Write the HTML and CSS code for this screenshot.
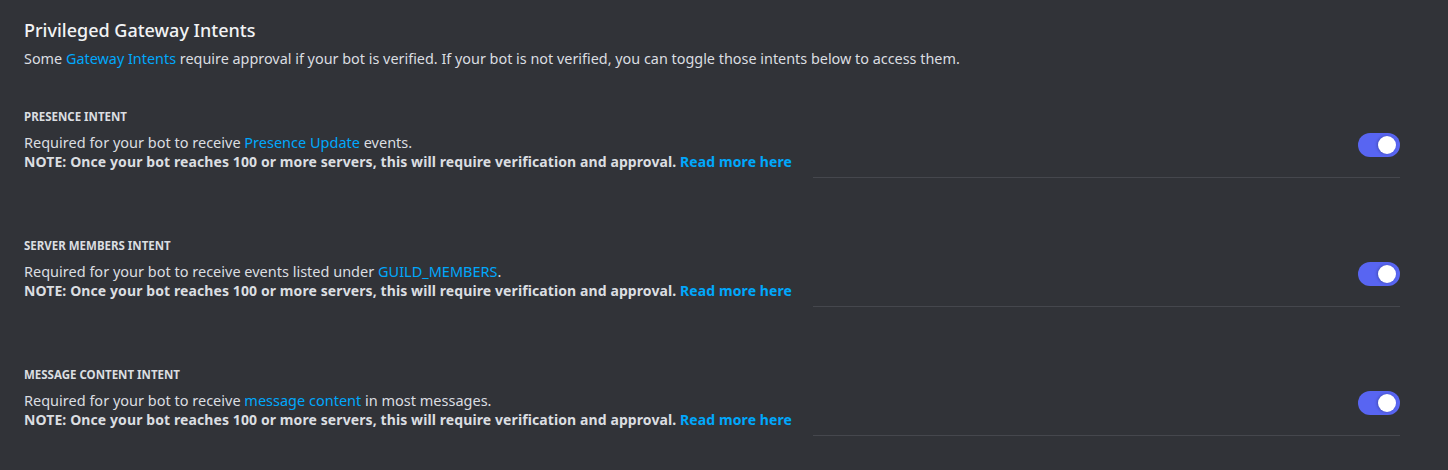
FILE: index.html
```html
<!DOCTYPE html>
<html lang="en">
<head>
<meta charset="utf-8">
<title>Privileged Gateway Intents</title>
<link rel="stylesheet" href="styles.css">
</head>
<body>
<main class="page">
  <header class="intro">
    <h2 class="title">Privileged Gateway Intents</h2>
    <p class="subtitle">Some <a class="link" href="#">Gateway Intents</a> require approval if your bot is verified. If your bot is not verified, you can toggle those intents below to access them.</p>
  </header>

  <section class="intent">
    <h3 class="intent-label">PRESENCE INTENT</h3>
    <div class="intent-row">
      <div class="intent-text">
        <p class="desc">Required for your bot to receive <a class="link" href="#">Presence Update</a> events.</p>
        <p class="note">NOTE: Once your bot reaches 100 or more servers, this will require verification and approval. <a class="link" href="#">Read more here</a></p>
      </div>
      <span class="toggle on" role="switch" aria-checked="true"><span class="knob"></span></span>
    </div>
    <div class="divider"></div>
  </section>

  <section class="intent">
    <h3 class="intent-label">SERVER MEMBERS INTENT</h3>
    <div class="intent-row">
      <div class="intent-text">
        <p class="desc">Required for your bot to receive events listed under <a class="link" href="#">GUILD_MEMBERS</a>.</p>
        <p class="note">NOTE: Once your bot reaches 100 or more servers, this will require verification and approval. <a class="link" href="#">Read more here</a></p>
      </div>
      <span class="toggle on" role="switch" aria-checked="true"><span class="knob"></span></span>
    </div>
    <div class="divider"></div>
  </section>

  <section class="intent">
    <h3 class="intent-label">MESSAGE CONTENT INTENT</h3>
    <div class="intent-row">
      <div class="intent-text">
        <p class="desc">Required for your bot to receive <a class="link" href="#">message content</a> in most messages.</p>
        <p class="note">NOTE: Once your bot reaches 100 or more servers, this will require verification and approval. <a class="link" href="#">Read more here</a></p>
      </div>
      <span class="toggle on" role="switch" aria-checked="true"><span class="knob"></span></span>
    </div>
    <div class="divider"></div>
  </section>
</main>
</body>
</html>
```

FILE: styles.css
```css
html, body {
  margin: 0;
  padding: 0;
  background: #313338;
}

body {
  font-family: "Noto Sans", "Open Sans", sans-serif;
  color: #dbdee1;
  -webkit-font-smoothing: antialiased;
}

.page {
  padding: 18px 48px 0 24px;
}

.title {
  margin: 0;
  font-size: 18px;
  line-height: 24px;
  font-weight: 500;
  color: #f2f3f5;
}

.subtitle {
  margin: 7px 0 0;
  font-size: 14.4px;
  line-height: 20px;
  color: #dbdee1;
}

.link {
  color: #00a8fc;
  text-decoration: none;
}

.intent {
  margin-top: 40px;
}

.intent + .intent {
  margin-top: 60px;
}

.intent-label {
  margin: 0 0 7px;
  font-size: 11.5px;
  line-height: 16px;
  font-weight: 700;
  color: #dbdee1;
}

.intent-row {
  display: flex;
  justify-content: space-between;
  align-items: flex-start;
}

.desc, .note {
  margin: 0;
  line-height: 20px;
}

.desc {
  font-size: 14.5px;
}

.note {
  font-size: 14px;
  font-weight: 700;
  letter-spacing: 0.1px;
}

.toggle {
  position: relative;
  flex: none;
  width: 42px;
  height: 24px;
  margin-top: 1px;
  border-radius: 12px;
  background: #5865f2;
}

.knob {
  position: absolute;
  top: 3px;
  right: 4px;
  width: 18px;
  height: 18px;
  border-radius: 50%;
  background: #ffffff;
  box-shadow: -1px 0 3px rgba(0, 0, 0, 0.25);
}

.divider {
  width: 587px;
  height: 1px;
  margin: 5px 0 0 auto;
  background: #45474d;
}
```
